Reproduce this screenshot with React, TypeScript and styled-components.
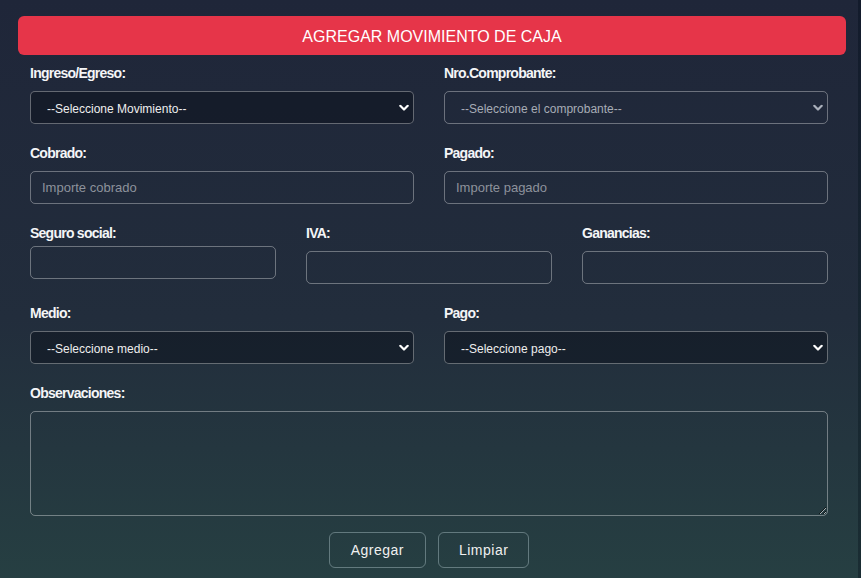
import React from "react";
import styled, { createGlobalStyle } from "styled-components";

const GlobalStyle = createGlobalStyle`
  html, body {
    margin: 0;
    padding: 0;
  }
  body {
    background: linear-gradient(180deg, #131b2c 0%, #1a2d33 100%);
    font-family: "Liberation Sans", Arial, sans-serif;
  }
`;

const Page = styled.div`
  width: calc(100% - 3px);
  min-height: 578px;
  box-sizing: border-box;
  padding-top: 16px;
  background: linear-gradient(180deg, #1f2639 0%, #222d3c 55%, #263f42 100%);
`;

const Header = styled.div`
  height: 39px;
  margin: 0 12px 0 18px;
  border-radius: 6px;
  background: #e63549;
  color: #ffffff;
  font-size: 16px;
  padding-top: 2px;
  box-sizing: border-box;
  display: flex;
  align-items: center;
  justify-content: center;
`;

const Form = styled.form`
  display: flex;
  flex-direction: column;
  gap: 21px;
  padding: 10px 30px 0;
`;

const Row = styled.div<{ cols: number }>`
  display: grid;
  grid-template-columns: repeat(${(p) => p.cols}, 1fr);
  column-gap: 30px;
  align-items: start;
`;

const Field = styled.div`
  display: flex;
  flex-direction: column;
`;

const Label = styled.label<{ tight?: boolean }>`
  font-size: 14px;
  line-height: 17px;
  font-weight: bold;
  letter-spacing: -0.75px;
  color: #f4f5f7;
  margin-bottom: ${(p) => (p.tight ? "4px" : "9px")};
`;

const Input = styled.input`
  height: 33px;
  box-sizing: border-box;
  border: 1px solid rgba(255, 255, 255, 0.34);
  border-radius: 5px;
  background: transparent;
  padding: 0 11px;
  color: #e8e8e8;
  font-family: "Liberation Sans", Arial, sans-serif;
  font-size: 13px;
  outline: none;

  &::placeholder {
    color: #8d929c;
  }
`;

const SelectWrap = styled.div`
  position: relative;
`;

const Select = styled.select<{ muted?: boolean }>`
  appearance: none;
  width: 100%;
  height: 33px;
  box-sizing: border-box;
  border: 1px solid rgba(255, 255, 255, 0.34);
  border-radius: 5px;
  padding: 2px 24px 0 16px;
  background: ${(p) => (p.muted ? "transparent" : "rgba(8, 12, 22, 0.42)")};
  color: ${(p) => (p.muted ? "#a7acb6" : "#eeeeee")};
  font-family: "Liberation Sans", Arial, sans-serif;
  font-size: 12px;
  outline: none;
`;

const Chevron = styled.svg<{ muted?: boolean }>`
  position: absolute;
  right: 5px;
  top: 50%;
  transform: translateY(-50%);
  width: 10px;
  height: 7px;
  pointer-events: none;
  color: ${(p) => (p.muted ? "#aab0bb" : "#ffffff")};
`;

const TextArea = styled.textarea`
  height: 105px;
  box-sizing: border-box;
  border: 1px solid rgba(255, 255, 255, 0.36);
  border-radius: 5px;
  background: transparent;
  color: #e8e8e8;
  font-family: "Liberation Sans", Arial, sans-serif;
  font-size: 13px;
  padding: 8px 11px;
  outline: none;
`;

const Actions = styled.div`
  display: flex;
  justify-content: center;
  gap: 12px;
  margin-top: -5px;
`;

const Button = styled.button<{ pad: number }>`
  height: 36px;
  padding: 0 ${(p) => p.pad}px;
  border: 1px solid rgba(200, 220, 225, 0.38);
  border-radius: 6px;
  background: transparent;
  color: #f0f0f0;
  font-family: "Liberation Sans", Arial, sans-serif;
  font-size: 14px;
  letter-spacing: 0.5px;
  cursor: pointer;
`;

type SelectProps = {
  text: string;
  muted?: boolean;
};

const SelectBox = ({ text, muted }: SelectProps) => (
  <SelectWrap>
    <Select muted={muted} defaultValue="">
      <option value="">{text}</option>
    </Select>
    <Chevron muted={muted} viewBox="0 0 10 7" fill="none">
      <path
        d="M1.3 1.3 L5 5 L8.7 1.3"
        stroke="currentColor"
        strokeWidth="2.2"
        strokeLinecap="round"
        strokeLinejoin="round"
      />
    </Chevron>
  </SelectWrap>
);

const App = () => {
  return (
    <>
      <GlobalStyle />
      <Page>
        <Header>AGREGAR MOVIMIENTO DE CAJA</Header>
        <Form onSubmit={(e) => e.preventDefault()}>
          <Row cols={2}>
            <Field>
              <Label>Ingreso/Egreso:</Label>
              <SelectBox text="--Seleccione Movimiento--" />
            </Field>
            <Field>
              <Label>Nro.Comprobante:</Label>
              <SelectBox text="--Seleccione el comprobante--" muted />
            </Field>
          </Row>
          <Row cols={2}>
            <Field>
              <Label>Cobrado:</Label>
              <Input placeholder="Importe cobrado" />
            </Field>
            <Field>
              <Label>Pagado:</Label>
              <Input placeholder="Importe pagado" />
            </Field>
          </Row>
          <Row cols={3}>
            <Field>
              <Label tight>Seguro social:</Label>
              <Input />
            </Field>
            <Field>
              <Label>IVA:</Label>
              <Input />
            </Field>
            <Field>
              <Label>Ganancias:</Label>
              <Input />
            </Field>
          </Row>
          <Row cols={2}>
            <Field>
              <Label>Medio:</Label>
              <SelectBox text="--Seleccione medio--" />
            </Field>
            <Field>
              <Label>Pago:</Label>
              <SelectBox text="--Seleccione pago--" />
            </Field>
          </Row>
          <Field>
            <Label>Observaciones:</Label>
            <TextArea />
          </Field>
          <Actions>
            <Button type="submit" pad={21}>
              Agregar
            </Button>
            <Button type="button" pad={20}>
              Limpiar
            </Button>
          </Actions>
        </Form>
      </Page>
    </>
  );
};

export default App;
